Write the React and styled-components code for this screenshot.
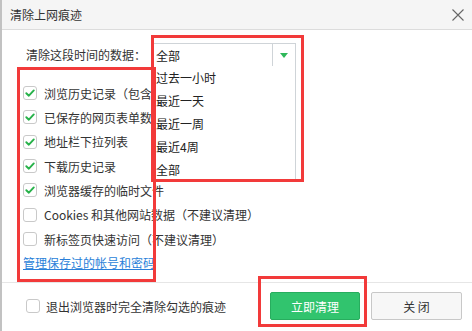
import React from "react";
import styled, { createGlobalStyle } from "styled-components";

const GlobalStyle = createGlobalStyle`
  html, body {
    margin: 0;
    padding: 0;
    background: #ffffff;
  }
  body {
    font-family: "Noto Sans CJK SC", "Liberation Sans", sans-serif;
    font-size: 12px;
    color: #333;
    text-spacing-trim: space-all;
  }
`;

const Dialog = styled.div`
  position: relative;
  width: 472px;
  height: 331px;
  box-sizing: border-box;
  border-left: 2px solid #c2c2c2;
  background: #fff;
  overflow: hidden;
  display: flex;
  flex-direction: column;
`;

const TitleBar = styled.div`
  height: 29px;
  flex: none;
  background: #f5f5f5;
  border-bottom: 1px solid #dcdcdc;
  display: flex;
  align-items: center;
  justify-content: space-between;
  padding: 0 7px 0 8px;
`;

const Title = styled.span`
  font-size: 12px;
  color: #333;
  line-height: 1;
`;

const CloseBtn = styled.button`
  border: none;
  background: none;
  padding: 0;
  width: 14px;
  height: 14px;
  display: flex;
  align-items: center;
  justify-content: center;
  cursor: pointer;
`;

const Body = styled.div`
  flex: none;
  height: 252px;
  padding: 13px 0 0 21px;
  box-sizing: border-box;
  display: flex;
  flex-direction: column;
`;

const TimeRow = styled.div`
  display: flex;
  align-items: center;
  height: 24px;
  padding-left: 3px;
`;

const Label = styled.span`
  width: 125px;
  line-height: 1;
  white-space: nowrap;
`;

const Select = styled.div`
  position: relative;
  width: 145px;
  height: 24px;
  box-sizing: border-box;
  border: 1px solid #cfd4d8;
  display: flex;
  align-items: center;
  background: #fff;
`;

const SelectValue = styled.span`
  flex: 1;
  padding-left: 4px;
  color: #222;
`;

const Arrow = styled.span`
  width: 22px;
  height: 100%;
  border-left: 1px solid #cfd4d8;
  display: flex;
  align-items: center;
  justify-content: center;
`;

const Menu = styled.ul`
  position: absolute;
  top: 100%;
  left: -1px;
  width: 145px;
  box-sizing: border-box;
  margin: 0;
  padding: 0;
  list-style: none;
  background: #fff;
  border: 1px solid #cfd4d8;
  border-top: none;
  z-index: 2;
`;

const MenuItem = styled.li`
  height: 23px;
  line-height: 23px;
  padding-left: 4px;
  color: #222;
`;

const List = styled.div`
  margin-top: 14px;
  display: grid;
  grid-auto-rows: 24.33px;
`;

const Row = styled.label`
  display: flex;
  align-items: center;
  gap: 7px;
  white-space: nowrap;
`;

const Box = styled.span`
  width: 14px;
  height: 14px;
  flex: none;
  box-sizing: border-box;
  border: 1px solid #c9c9c9;
  border-radius: 3px;
  background: #fff;
  display: flex;
  align-items: center;
  justify-content: center;
`;

const ManageLink = styled.a`
  display: block;
  height: 24px;
  line-height: 24px;
  color: #2a7fd9;
  text-decoration: underline;
  cursor: pointer;
`;

const Footer = styled.div`
  flex: 1;
  border-top: 1px solid #e6e6e6;
  display: flex;
  align-items: flex-start;
  padding: 9px 0 0 24px;
`;

const ExitRow = styled(Row)`
  flex: 1;
  height: 28px;
  gap: 6px;
`;

const Button = styled.button`
  width: ${(p) => (p.$primary ? "90px" : "91px")};
  height: 28px;
  box-sizing: border-box;
  margin-right: ${(p) => (p.$primary ? "11px" : "10px")};
  border: 1px solid ${(p) => (p.$primary ? "#27ad5e" : "#c8c8c8")};
  border-radius: 2px;
  background: ${(p) => (p.$primary ? "#31c46e" : "#f7f7f7")};
  color: ${(p) => (p.$primary ? "#fff" : "#333")};
  font-family: inherit;
  font-size: 12px;
  cursor: pointer;
  padding: 0;
`;

const Mark = styled.div`
  position: absolute;
  left: ${(p) => p.$x}px;
  top: ${(p) => p.$y}px;
  width: ${(p) => p.$w}px;
  height: ${(p) => p.$h}px;
  box-sizing: border-box;
  border: 3px solid #f23a3a;
  pointer-events: none;
  z-index: 5;
`;

function Check({ checked }) {
  return (
    <Box>
      {checked && (
        <svg width="12" height="12" viewBox="0 0 12 12">
          <path d="M2.3 6.2 L4.9 8.7 L9.8 3.4" fill="none" stroke="#27b24a" strokeWidth="1.9" strokeLinecap="round" strokeLinejoin="round" />
        </svg>
      )}
    </Box>
  );
}

const items = [
  { text: "浏览历史记录（包含最近关闭的标签）", checked: true },
  { text: "已保存的网页表单数据", checked: true },
  { text: "地址栏下拉列表", checked: true },
  { text: "下载历史记录", checked: true },
  { text: "浏览器缓存的临时文件", checked: true },
  { text: "Cookies 和其他网站数据（不建议清理）", checked: false },
  { text: "新标签页快速访问（不建议清理）", checked: false },
];

const ranges = ["过去一小时", "最近一天", "最近一周", "最近4周", "全部"];

export default function App() {
  return (
    <>
      <GlobalStyle />
      <Dialog>
        <TitleBar>
          <Title>清除上网痕迹</Title>
          <CloseBtn>
            <svg width="12" height="12" viewBox="0 0 12 12">
              <path d="M0.5 0.5 L11.5 11.5 M11.5 0.5 L0.5 11.5" stroke="#666" strokeWidth="1.1" />
            </svg>
          </CloseBtn>
        </TitleBar>
        <Body>
          <TimeRow>
            <Label>清除这段时间的数据：</Label>
            <Select>
              <SelectValue>全部</SelectValue>
              <Arrow>
                <svg width="8" height="5" viewBox="0 0 8 5">
                  <path d="M0 0 L8 0 L4 5 Z" fill="#2fb85a" />
                </svg>
              </Arrow>
              <Menu>
                {ranges.map((r) => (
                  <MenuItem key={r}>{r}</MenuItem>
                ))}
              </Menu>
            </Select>
          </TimeRow>
          <List>
            {items.map((it) => (
              <Row key={it.text}>
                <Check checked={it.checked} />
                <span>{it.text}</span>
              </Row>
            ))}
            <ManageLink>管理保存过的帐号和密码</ManageLink>
          </List>
        </Body>
        <Footer>
          <ExitRow>
            <Check checked={false} />
            <span>退出浏览器时完全清除勾选的痕迹</span>
          </ExitRow>
          <Button $primary>立即清理</Button>
          <Button>关 闭</Button>
        </Footer>
        <Mark $x={149} $y={35} $w={153} $h={147} />
        <Mark $x={15} $y={67} $w={139} $h={215} />
        <Mark $x={256} $y={276} $w={109} $h={51} />
      </Dialog>
    </>
  );
}
